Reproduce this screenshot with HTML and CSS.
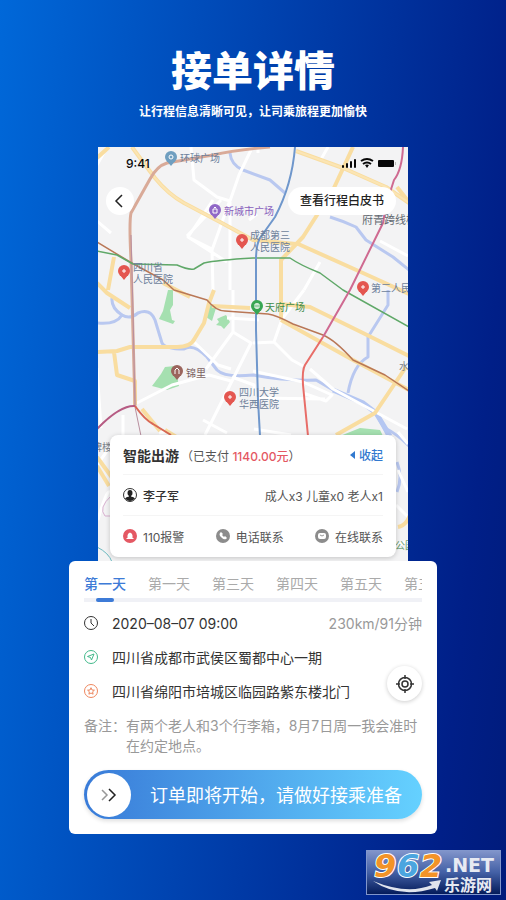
FILE: index.html
```html
<!DOCTYPE html>
<html lang="zh-CN">
<head>
<meta charset="utf-8">
<meta name="viewport" content="width=device-width, initial-scale=1">
<title>接单详情</title>
<link rel="stylesheet" href="styles.css">
</head>
<body>
<main class="page">
  <header class="hero">
    <h1>接单详情</h1>
    <p>让行程信息清晰可见，让司乘旅程更加愉快</p>
  </header>

  <div class="stage">
    <section class="phone" aria-label="行程地图">
      <svg class="map" viewBox="98 147 310 414" preserveAspectRatio="xMidYMin slice" aria-hidden="true">
        <rect x="-400" y="147" width="1400" height="415" fill="#f3f3f4"/>
        <g fill="#a5e0b0">
          <path d="M152 386 161 374 165 367 175 366 179 386 167 390Z"/>
          <path d="M168 290h5v15l-3 5 2 10 3 1-2 3-14-5 4-8z"/>
          <path d="M209 304l7 4-4 13-6-4zM217 319l4-2 5-2 4 7-6 7-3-3-5-1 3-3zM340 436l20-8 20 2 3 6z"/>
        </g>
        <g class="river">
          <path d="M97 323 Q116 325 122 315 Q130 320 138 313 Q150 308 155 320 L162 343 Q165 349 184 349 Q193 343 207 357 L217 370 Q225 378 253 375 Q285 381 316 380 L333 390 363 403 376 413 388 436"/>
          <path d="M112 298 Q111 308 122 315M230 153 Q231 165 243 170L270 180 285 193M330 217 Q343 221 356 227 L366 240 393 257 409 270M388 290v15l-20 32v20q-15 8-20 36"/>
          <path d="M397 462q6 15 0 30M385 428q12 6 24 18"/>
        </g>
        <path d="M333 390 363 403 376 413 390 436" fill="none" stroke="#b5c7f2" stroke-width="5"/>
        <g class="minor">
          <path d="M191 147l3 33 23 17 13 4 9-26 12-25M230 202v88M221 200l-34 36M213 200l-25 37 24 12M230 200l-18 50 1 40M188 237l39 25M97 221l14 12M328 147l-8 14M258 147v6M97 165l10-18M320 262l-16 28M380 241l28 15M257 214l-8 6"/>
          <path d="M233 290v42l18 11-46 92M233 332l-27 37M253 343l21-1 8-23 22-29M274 342l18 18 11 6M193 341l25 24 13 4M133 405l39-20 37-10 22 6M227 318l32 2M97 368l4 60M203 420l24 13M123 415v20M159 433l10-2M232 377l22 8 0 10M259 398l66 1M310 369l23 20 74 40M253 371l50 11 29 13-6 6-23-8M254 429l37 6"/>
          <path d="M98 520q8-30 12-28M97 465l13-18M398 470l10 22M396 505l12 12M398 432l10 12M398 545l10-4"/>
        </g>
        <g class="road">
          <path d="M132 147 143 162 155 178 Q168 194 184 203 L220 222 253 240 296 244 M97 158 109 147M114 257 108 290M97 283l10 10 23 15M97 352 117 351 130 347H177Q191 347 195 338L204 323 209 303 214 290M114 352 117 375 135 381V405M212 306 250 308M281 304 310 307 363 333 409 356M281 320 353 360 409 390M406 367 375 413 336 435M281 320V260L303 237 333 190 353 147M296 151 343 168 386 187 409 203M296 243 363 273 409 294M97 457l16 22M97 466l12 20M398 527q11-2 14-20M397 187l11 14"/>
          <path d="M163 283 190 297M165 430l13 8M142 409l18 22"/>
        </g>
        <path d="M296 151 343 168 386 187 409 203M132 147 143 162 155 178 Q168 194 184 203 L220 222 253 240" fill="none" stroke="#fbe5b4" stroke-width="2"/>
        <g class="rail">
          <path stroke="#d9aa98" stroke-width="3" d="M270 147 Q235 150 213 155 L167 163 Q157 166 150 179 L131 213 Q129 222 131 260 L135 407"/>
          <path stroke="#b98f9f" stroke-width="1" d="M131 235 133 310 135 407 141 436"/>
          <path stroke="#b97756" stroke-width="1.500" d="M97 242 130 262 163 280 174 290 207 300 Q216 311 225 311L268 314 Q276 315 293 324L323 335 Q335 340 353 360L385 375 409 391"/>
          <path stroke="#5fa868" stroke-width="1.500" d="M97 251 117 255 133 264 177 265 Q188 270 194 269L204 263Q217 260 253 258H290Q300 265 320 273L343 290 409 327"/>
          <path stroke="#6f97cc" stroke-width="2" d="M295 147Q292 185 275 217L260 238Q256 245 256 260V330L258 400 260 436"/>
          <path stroke="#cf6a91" stroke-width="2" d="M403 147Q402 170 394 180 L386 205 383 223 350 290 323 337"/>
          <path stroke="#e86d68" stroke-width="2" d="M323 337 305 365Q302 370 303 385L308 436"/>
          <path stroke="#b65b83" stroke-width="2" d="M97 429Q120 405 135 406"/>
          <path stroke="#d96855" stroke-width="2" d="M135 406Q145 420 153 424L171 435"/>
          <path stroke="#6bb9c0" d="M97 547q12 6 15 15"/>
          <path stroke="#d8b0d0" d="M111 496q-13 12-6 20h8"/>
        </g>
        <g fill="#e45650"><path d="M238 244h8l-4 5zM120 275h8l-4 5zM359 291h8l-4 5zM226 401h8l-4 5z"/><path fill="#9168c7" d="M211 214h8l-4 5z"/><path fill="#38a653" d="M253 310h8l-4 5z"/><path fill="#9b655d" d="M173 375h8l-4 5z"/><path fill="#709fc0" d="M167 161h8l-4 5z"/></g>
        <g>
          <circle cx="171" cy="157" r="6" fill="#709fc0"/>
          <circle cx="215" cy="210" r="6" fill="#9168c7"/><circle cx="242" cy="240" r="6" fill="#e45650"/>
          <circle cx="124" cy="271" r="6" fill="#e45650"/><circle cx="363" cy="287" r="6" fill="#e45650"/>
          <circle cx="257" cy="306" r="6" fill="#38a653"/><circle cx="177" cy="371" r="6" fill="#9b655d"/><circle cx="230" cy="397" r="6" fill="#e45650"/>
        </g>
        <g fill="none" stroke="#fff" stroke-width="1">
          <path d="M240 240h4m-2-2v4M122 271h4m-2-2v4M361 287h4m-2-2v4M228 397h4m-2-2v4M175 374v-4l2-2 2 2v4M255 304h4v4h-4zM257 303v6"/>
          <path d="M213 209h4v4h-4zM214 208q1-2 2 0"/><circle cx="171" cy="157" r="2"/>
        </g>
        <g class="place">
          <text x="180" y="162">环球广场</text>
          <text x="224" y="215" fill="#8960bd">新城市广场</text>
          <text x="250" y="239">成都第三</text><text x="250" y="251">人民医院</text>
          <text x="133" y="271">四川省</text><text x="133" y="283">人民医院</text>
          <text x="371" y="292">第二人民</text>
          <text x="265" y="311" fill="#3d8c49">天府广场</text>
          <text x="186" y="377" fill="#7b5f60">锦里</text>
          <text x="239" y="396">四川大学</text><text x="239" y="408">华西医院</text>
          <text x="362" y="224" fill="#626970" font-size="11">府青跨线桥</text>
          <text x="399" y="370" fill="#7b8189">水</text>
          <text x="92" y="451" fill="#7b8189">碑楼</text>
          <text x="395" y="549" fill="#6a9d70">公园</text>
        </g>
      </svg>

      <div class="status">
        <span>9:41</span>
        <svg width="54" height="12" viewBox="0 0 54 12" aria-hidden="true">
          <g fill="#080808"><rect y="8" width="2" height="3" rx="1"/><rect x="4" y="6" width="2" height="5" rx="1"/><rect x="8" y="4" width="2" height="7" rx="1"/><rect x="12" y="2" width="2" height="9" rx="1"/><rect x="36" y="3" width="16" height="7" rx="1"/><path d="M25 11l-2-3q2-1 4 0z"/></g>
          <g fill="none" stroke="#080808" stroke-width="2"><path d="M19 4q6-4 12 0M21 7q4-3 8 0"/></g>
          <path d="M53.500 5v3" stroke="#bbb"/>
        </svg>
      </div>
      <div class="nav">
        <button class="back" aria-label="返回"><svg width="12" height="14" viewBox="0 0 12 14" aria-hidden="true"><path d="M8 1 2 7l6 6" fill="none" stroke="#222" stroke-width="1.500"/></svg></button>
        <button class="guide">查看行程白皮书</button>
      </div>

      <article class="trip">
        <div class="trip-row trip-title">
          <h2>智能出游<small>（已支付 <em>1140.00元</em>）</small></h2>
          <button class="fold"><svg width="6" height="8" viewBox="0 0 6 8" aria-hidden="true"><path d="M5 0v8L0 4z" fill="#3279cf"/></svg>收起</button>
        </div>
        <div class="trip-row">
          <strong class="rider"><svg width="14" height="14" viewBox="0 0 14 14" aria-hidden="true"><circle cx="7" cy="7" r="6.500" fill="#fff" stroke="#333"/><ellipse cx="7" cy="5" rx="2.500" ry="3" fill="#222"/><path d="M6 7h2v1.500q3 .5 4 2-5 5-10 0 1-1.500 4-2z" fill="#222"/></svg>李子军</strong>
          <span>成人x3 儿童x0 老人x1</span>
        </div>
        <div class="trip-row">
          <button><svg width="14" height="14" viewBox="0 0 14 14" aria-hidden="true"><circle cx="7" cy="7" r="7" fill="#e45863"/><path d="M4.500 9V6.500q0-2 2.500-3 2.500 1 2.500 3V9h1v1h-7V9z" fill="#fff"/></svg>110报警</button>
          <button><svg width="14" height="14" viewBox="0 0 14 14" aria-hidden="true"><circle cx="7" cy="7" r="7" fill="#8c8c8c"/><path d="M4 4l1-1 2 2-1 1 2 2 1-1 2 2-1 1q-2 1-4-1L4 7Q3 5 4 4z" fill="#fff"/></svg>电话联系</button>
          <button><svg width="14" height="14" viewBox="0 0 14 14" aria-hidden="true"><circle cx="7" cy="7" r="7" fill="#8c8c8c"/><rect x="3" y="4" width="8" height="6" rx="2" fill="#fff"/><path d="M5 6q2 2 4 0" fill="none" stroke="#999"/></svg>在线联系</button>
        </div>
      </article>
    </section>

    <section class="sheet" aria-label="订单行程">
      <nav class="days" aria-label="日期">
        <button class="active">第一天</button><button>第一天</button><button>第三天</button><button>第四天</button><button>第五天</button><button>第五天</button>
      </nav>
      <div class="stops">
        <div class="stop"><svg width="14" height="14" viewBox="0 0 14 14" aria-hidden="true"><g fill="none" stroke="#333"><circle cx="7" cy="7" r="6.500"/><path d="M7 3v4l3 3"/></g></svg><time>2020–08–07 09:00</time><span class="distance">230km/91分钟</span></div>
        <div class="stop"><svg width="14" height="14" viewBox="0 0 14 14" aria-hidden="true"><g fill="none" stroke="#43b98b"><circle cx="7" cy="7" r="6.500"/><path d="M10 4 3.500 6.500 6.500 7.500 7.500 10z" stroke-linejoin="round"/></g></svg><span>四川省成都市武侯区蜀都中心一期</span></div>
        <div class="stop"><svg width="14" height="14" viewBox="0 0 14 14" aria-hidden="true"><g fill="none" stroke="#ee875f"><circle cx="7" cy="7" r="6.500"/><path d="M7 3.700 8 6l2.400.2-1.800 1.600.5 2.400L7 9l-2.100 1.200.5-2.400-1.800-1.600L6 6z"/></g></svg><span>四川省绵阳市培城区临园路紫东楼北门</span>
          <button class="locate" aria-label="定位"><svg width="18" height="18" viewBox="0 0 18 18" aria-hidden="true"><g fill="none" stroke="#333"><circle cx="9" cy="9" r="6.500" stroke-width="1.500"/><circle cx="9" cy="9" r="3" stroke-width="1.500"/><path d="M9 0v4M9 14v4M0 9h4M14 9h4" stroke-width="1.500"/></g></svg></button>
        </div>
      </div>
      <dl class="note"><dt>备注：</dt><dd>有两个老人和3个行李箱，8月7日周一我会准时在约定地点。</dd></dl>
      <button class="start"><span class="knob"><svg width="16" height="14" viewBox="0 0 16 14" aria-hidden="true"><g fill="none" stroke-width="1.500"><path d="M1 2l5 5-5 5" stroke="#999"/><path d="M8 1l6 6-6 6" stroke="#222"/></g></svg></span><span class="start-label">订单即将开始，请做好接乘准备</span></button>
    </section>
  </div>

  <svg class="brand" width="135" height="45" viewBox="0 0 135 45" role="img" aria-label="962.NET 乐游网">
    <defs><linearGradient id="plate" x2="0" y2="1"><stop stop-color="#8295cb"/><stop offset=".5" stop-color="#4360a5"/><stop offset="1" stop-color="#031a59"/></linearGradient></defs>
    <rect x=".5" y=".5" width="134" height="44" fill="url(#plate)" stroke="#8196cc"/>
    <path d="M7 31q34 14 59 4l-3-3 12-2-4 11-2-3Q33 49 7 31z" fill="#e0e4ed"/>
    <g class="digits"><text x="8" y="27" fill="#f29328">9</text><text x="31" y="27" fill="#4ba5df">6</text><text x="54" y="27" fill="#f29328">2</text></g>
    <text class="net" x="79" y="22">.NET</text>
    <text class="cn" x="78" y="41">乐游网</text>
  </svg>
</main>
</body>
</html>
```
FILE: styles.css
```css
* { box-sizing: border-box; }

body {
  margin: 0;
  font-family: Inter, "Noto Sans CJK SC", sans-serif;
  color: #333;
}

button {
  margin: 0;
  padding: 0;
  border: 0;
  background: none;
  color: inherit;
  font: inherit;
  white-space: nowrap;
  cursor: pointer;
}

svg { display: block; flex: none; }

.page {
  position: relative;
  min-height: 100vh;
  padding: 44px 16px 66px;
  background: linear-gradient(96deg, #0068d9 0%, #001f88 88%, #001b7b 100%);
}

.hero { color: #fff; text-align: center; }
.hero h1 { margin: 0; font-size: 41px; line-height: 54px; font-weight: 900; }
.hero p { margin: 6px 0 0; font-size: 12px; line-height: 16px; font-weight: 700; }

.stage { max-width: 368px; margin: 27px auto 0; }

.phone {
  position: relative;
  margin: 0 29px;
  padding: 8px 12px 4px;
  overflow: hidden;
  isolation: isolate;
}

.map { position: absolute; inset: 0; z-index: -1; width: 100%; height: 100%; }
.river, .minor, .road, .rail { fill: none; stroke-linejoin: round; }
.river { stroke: #b9c8f0; stroke-width: 3; }
.minor { stroke: #fff; stroke-width: 3; }
.road { stroke: #f9dda0; stroke-width: 4; }
.rail { stroke-width: 1; }
.place { font-size: 10px; fill: #6d7f9b; }

.status {
  display: flex;
  align-items: center;
  justify-content: space-between;
  height: 16px;
  padding-left: 16px;
  color: #080808;
  font-size: 12px;
  font-weight: 500;
}

.nav {
  display: flex;
  align-items: center;
  justify-content: space-between;
  margin: 16px 0 0 -4px;
}
.back {
  display: grid;
  place-items: center;
  width: 28px;
  height: 28px;
  border-radius: 50%;
  background: #fff;
}
.guide {
  height: 28px;
  padding: 0 12px;
  border-radius: 14px;
  background: #fff;
  color: #222;
  font-size: 12px;
  line-height: 26px;
  font-weight: 500;
}

.trip {
  margin-top: 220px;
  padding: 0 13px 1px;
  border-radius: 8px;
  background: #fff;
  box-shadow: 0 1px 5px #0003;
  color: #555;
  font-size: 12px;
}
.trip-row {
  display: flex;
  align-items: center;
  justify-content: space-between;
  height: 41px;
}
.trip-title { height: 39px; }
.trip-row + .trip-row { border-top: 1px solid #f5f5f5; }
.trip-row button, .rider { display: flex; align-items: center; gap: 6px; }
.rider { color: #333; font-weight: 500; }
.trip h2 { margin: 0; color: #333; font-size: 14px; font-weight: 700; white-space: nowrap; }
.trip small { margin-left: 2px; color: #555; font-size: 12px; font-weight: 400; }
.trip em { color: #e45863; font-style: normal; font-weight: 500; }
.trip .fold { gap: 3px; color: #3279cf; font-weight: 500; }

.sheet {
  position: relative;
  padding: 11px 15px 15px;
  border-radius: 6px;
  background: #fff;
  font-size: 14px;
}
.days {
  display: flex;
  align-items: flex-start;
  gap: 22px;
  height: 30px;
  overflow: hidden;
  background: linear-gradient(#f0f1f6, #f0f1f6) 0 100% / 100% 4px no-repeat;
  color: #aaa;
  line-height: 23px;
}
.days .active { position: relative; height: 30px; padding-bottom: 7px; color: #3d7bd7; font-weight: 500; }
.days .active::after {
  content: "";
  position: absolute;
  bottom: 0;
  left: 12px;
  width: 18px;
  height: 4px;
  border-radius: 2px;
  background: #3d7bd7;
}

.stops { padding-top: 4px; color: #333; }
.stop { display: flex; align-items: center; gap: 14px; height: 34px; position: relative; white-space: nowrap; }
.distance { margin-left: auto; color: #999; }
.locate {
  position: absolute;
  right: 0;
  top: -8px;
  display: grid;
  place-items: center;
  width: 35px;
  height: 35px;
  border-radius: 50%;
  background: #fff;
  box-shadow: 0 1px 4px #0003;
}

.note { display: flex; margin: 8px 0 14px; color: #999; line-height: 20px; }
.note dt { flex: none; }
.note dd { margin: 0; }

.start {
  display: flex;
  align-items: center;
  width: 100%;
  height: 49px;
  padding: 0 20px 0 3px;
  border-radius: 25px;
  background: linear-gradient(90deg, #397bd8, #65d1ff);
  box-shadow: 0 2px 4px #0002;
  color: #fff;
  font-size: 18px;
}
.knob {
  display: grid;
  flex: none;
  place-items: center;
  width: 44px;
  height: 44px;
  border-radius: 50%;
  background: #fff;
}
.start-label { flex: 1; padding-bottom: 2px; text-align: right; }

.brand { position: absolute; right: 5px; bottom: 5px; }
.digits { font: italic 700 32px "DejaVu Sans", sans-serif; stroke: #fff; stroke-width: 2px; paint-order: stroke; }
.net { font: 700 19px "DejaVu Sans", sans-serif; fill: #e7eaf2; }
.cn { font: 700 16px "Noto Sans CJK SC", sans-serif; fill: #e7eaf2; }
```
